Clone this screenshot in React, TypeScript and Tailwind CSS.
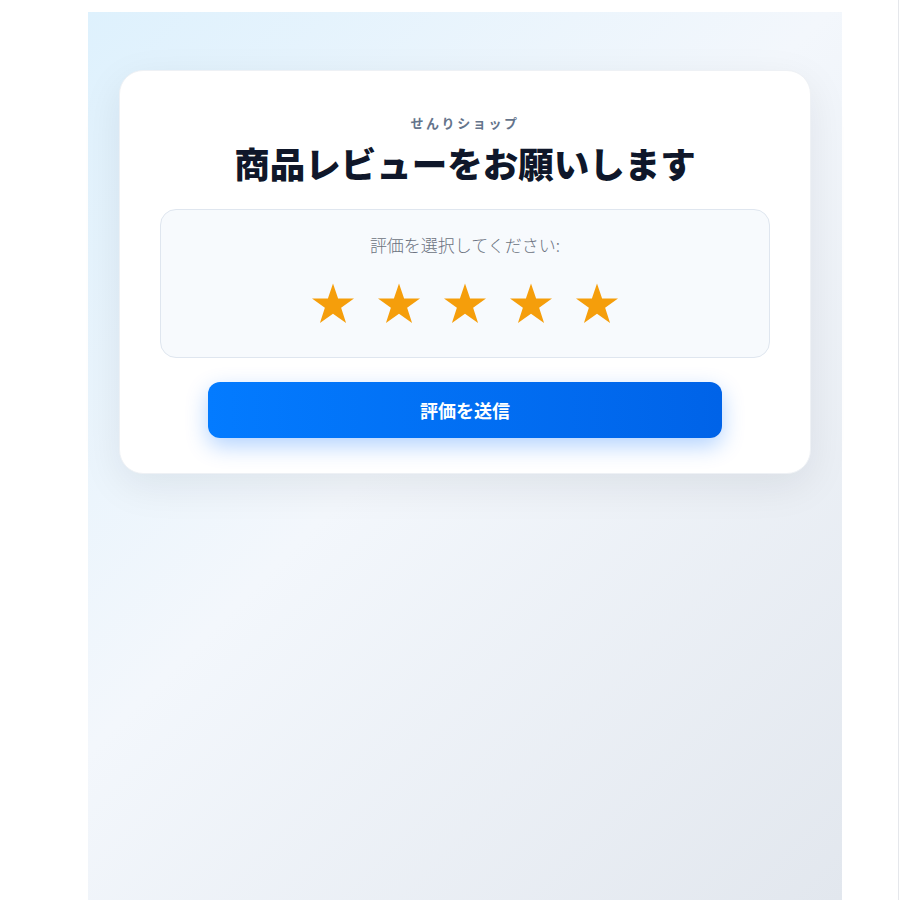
import React from "react";

function Star() {
    return (
        <svg width="48" height="48" viewBox="0 0 24 24" aria-hidden="true">
            <path
                d="M12 2.2l2.55 7.56h7.95l-6.43 4.67 2.46 7.57L12 17.33 5.47 22l2.46-7.57L1.5 9.76h7.95z"
                fill="#f59e0b"
            />
        </svg>
    );
}

export default function App() {
    const stars = [1, 2, 3, 4, 5];
    return (
        <div className="flex h-[900px] w-[900px] bg-white font-['Noto_Sans_CJK_JP','Noto_Sans',sans-serif]">
            <div className="ml-[88px] mt-[12px] w-[754px] h-[888px] bg-[linear-gradient(135deg,#def1fd_0%,#f3f7fc_45%,#e2e7ee_100%)] px-[31px] pt-[58px]">
                <div className="rounded-[24px] bg-white px-[40px] pt-[40px] pb-[35px] shadow-[0_12px_40px_rgba(15,23,42,0.08)] border border-[#eef1f5]">
                    <div className="text-center text-[13px] font-bold tracking-[0.2em] text-[#64748b] leading-[24px]">
                        せんりショップ
                    </div>
                    <h1 className="mt-[2px] text-center text-[35.5px] font-black leading-[52px] text-[#0f172a]">
                        商品レビューをお願いします
                    </h1>
                    <div className="mt-[20px] rounded-[16px] border border-[#dfe6ef] bg-[#f7fafd] pt-[23px] pb-[30px]">
                        <div className="text-center text-[17px] font-light leading-[24px] text-[#6b7280]">
                            評価を選択してください:
                        </div>
                        <div className="mt-[22px] flex justify-center gap-[18px]">
                            {stars.map((s) => (
                                <Star key={s} />
                            ))}
                        </div>
                    </div>
                    <button className="mx-auto mt-[24px] block h-[56px] w-[514px] rounded-[12px] bg-[linear-gradient(90deg,#037bff,#0063e8)] text-[18px] font-bold text-white shadow-[0_8px_22px_rgba(0,110,255,0.3)]">
                        評価を送信
                    </button>
                </div>
            </div>
            <div className="ml-auto w-[1px] bg-[#e5e7eb] mr-[1px]" />
        </div>
    );
}
